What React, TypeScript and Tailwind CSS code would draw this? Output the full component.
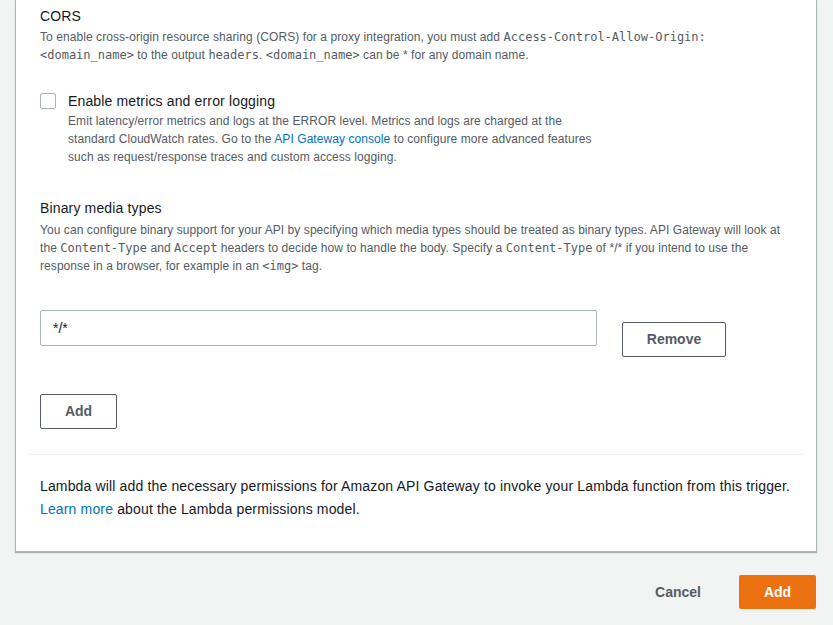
import React from "react";

const mono = "font-['DejaVu_Sans_Mono',monospace] text-[12px] tracking-normal";

function Code({ children }: { children: React.ReactNode }) {
  return <code className={mono}>{children}</code>;
}

export default function App() {
  return (
    <div className="w-[833px] h-[625px] overflow-hidden bg-[#f2f3f3] font-['Liberation_Sans',Arial,sans-serif] text-[#16191f]">
      <div className="ml-[15px] mr-[16px] bg-white border-x border-b border-[#aab7b8] shadow-[0_1px_1px_rgba(0,28,36,0.3)] pt-[6px] pb-[30px]">
        <div className="px-[24px]">
          <h3 className="text-[14px] leading-[20px] tracking-[0.15px]">CORS</h3>
          <p className="mt-[2px] text-[12px] leading-[18px] tracking-[0.07px] text-[#545b64]">
            To enable cross-origin resource sharing (CORS) for a proxy integration, you must add{" "}
            <Code>Access-Control-Allow-Origin:</Code>
            <br />
            <Code>&lt;domain_name&gt;</Code> to the output <Code>headers</Code>. <Code>&lt;domain_name&gt;</Code> can be * for any domain name.
          </p>

          <div className="mt-[28px] flex gap-[12px]">
            <span className="mt-[1px] w-[16px] h-[16px] shrink-0 rounded-[2px] border border-[#aab7b8] bg-white" />
            <div>
              <div className="text-[14px] leading-[20px] tracking-[0.15px] -mt-[1px]">Enable metrics and error logging</div>
              <p className="mt-[1px] text-[12px] leading-[18px] tracking-[0.07px] text-[#545b64] w-[560px]">
                Emit latency/error metrics and logs at the ERROR level. Metrics and logs are charged at the
                <br />
                standard CloudWatch rates. Go to the <a className="text-[#0073bb]">API Gateway console</a> to configure more advanced features
                <br />
                such as request/response traces and custom access logging.
              </p>
            </div>
          </div>

          <h3 className="mt-[32px] text-[14px] leading-[20px] tracking-[0.15px]">Binary media types</h3>
          <p className="mt-[3px] text-[12px] leading-[18px] tracking-[0.07px] text-[#545b64]">
            You can configure binary support for your API by specifying which media types should be treated as binary types. API Gateway will look at
            <br />
            the <Code>Content-Type</Code> and <Code>Accept</Code> headers to decide how to handle the body. Specify a <Code>Content-Type</Code> of */* if you intend to use the
            <br />
            response in a browser, for example in an <Code>&lt;img&gt;</Code> tag.
          </p>

          <div className="mt-[35px] flex items-start gap-[25px]">
            <div className="w-[557px] h-[36px] rounded-[2px] border border-[#aab7b8] flex items-center px-[12px] text-[14px]">
              */*
            </div>
            <button className="mt-[12px] w-[104px] h-[35px] rounded-[2px] border border-[#545b64] text-[14px] font-bold text-[#545b64]">
              Remove
            </button>
          </div>

          <button className="mt-[37px] w-[77px] h-[35px] rounded-[2px] border border-[#545b64] text-[14px] font-bold text-[#545b64]">
            Add
          </button>
        </div>

        <div className="mt-[25px] mx-[12px] border-t border-[#eaeded]" />

        <div className="px-[24px] pt-[20px] text-[14px] leading-[23px] tracking-[0.15px]">
          <p>Lambda will add the necessary permissions for Amazon API Gateway to invoke your Lambda function from this trigger.</p>
          <p>
            <a className="text-[#0073bb]">Learn more</a> about the Lambda permissions model.
          </p>
        </div>
      </div>

      <div className="mt-[23px] mr-[17px] flex justify-end items-center gap-[38px]">
        <button className="text-[14px] font-bold text-[#545b64]">Cancel</button>
        <button className="w-[77px] h-[34px] rounded-[2px] bg-[#ec7211] text-[14px] font-bold text-white">Add</button>
      </div>
    </div>
  );
}
